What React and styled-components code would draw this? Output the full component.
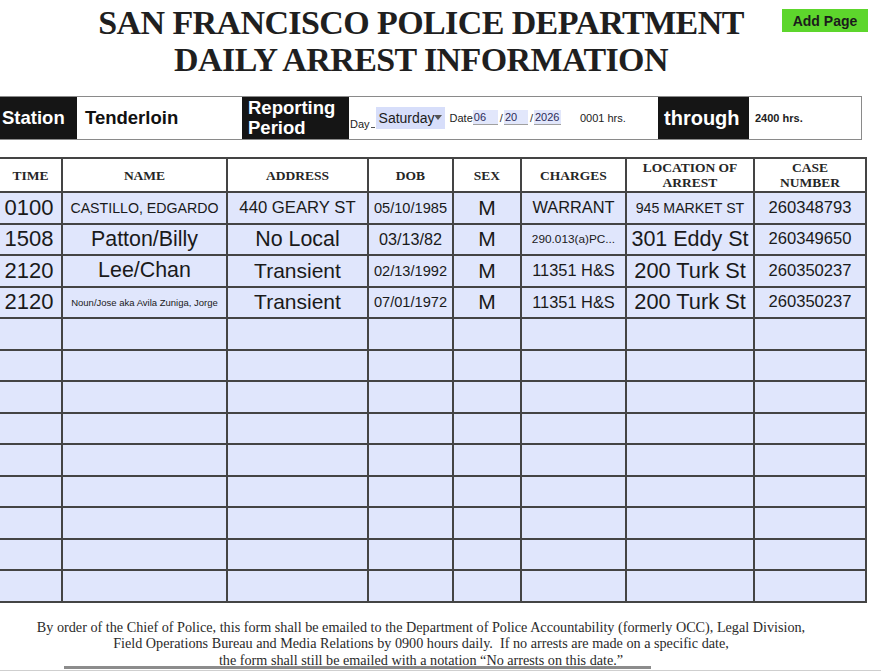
import React from "react";
import styled, { createGlobalStyle } from "styled-components";

const GlobalStyle = createGlobalStyle`
  html, body {
    margin: 0;
    padding: 0;
    background: #ffffff;
    overflow: hidden;
  }
  body {
    font-family: "Liberation Sans", Arial, sans-serif;
    color: #111111;
  }
`;

const rows = [
  {
    time: "0100",
    name: ["CASTILLO, EDGARDO", 14.2],
    address: ["440 GEARY ST", 16.7],
    dob: ["05/10/1985", 14.6],
    charges: ["WARRANT", 16.4],
    location: ["945 MARKET ST", 14.2],
    caseNo: "260348793",
  },
  {
    time: "1508",
    name: ["Patton/Billy", 21.4],
    address: ["No Local", 21.4],
    dob: ["03/13/82", 16.2],
    charges: ["290.013(a)PC...", 11.8],
    location: ["301 Eddy St", 21.5],
    caseNo: "260349650",
  },
  {
    time: "2120",
    name: ["Lee/Chan", 21.4],
    address: ["Transient", 21],
    dob: ["02/13/1992", 14.6],
    charges: ["11351 H&S", 16.4],
    location: ["200 Turk St", 21.8],
    caseNo: "260350237",
  },
  {
    time: "2120",
    name: ["Noun/Jose aka Avila Zuniga, Jorge", 9.5],
    address: ["Transient", 21],
    dob: ["07/01/1972", 14.6],
    charges: ["11351 H&S", 16.4],
    location: ["200 Turk St", 21.8],
    caseNo: "260350237",
  },
];

const columns = [
  { key: "time", label: "TIME", width: 63 },
  { key: "name", label: "NAME", width: 165 },
  { key: "address", label: "ADDRESS", width: 141 },
  { key: "dob", label: "DOB", width: 85 },
  { key: "sex", label: "SEX", width: 68 },
  { key: "charges", label: "CHARGES", width: 105 },
  { key: "location", label: ["LOCATION OF", "ARREST"], width: 128 },
  { key: "caseNo", label: ["CASE", "NUMBER"], width: 112 },
];

const EMPTY_ROWS = 9;

export default function App() {
  return (
    <>
      <GlobalStyle />
      <Page>
        <AddPageButton type="button">Add Page</AddPageButton>

        <Heading>
          SAN FRANCISCO POLICE DEPARTMENT
          <br />
          DAILY ARREST INFORMATION
        </Heading>

        <InfoBar>
          <BarLabel $width={77}>Station</BarLabel>
          <BarValue $width={165}>Tenderloin</BarValue>
          <BarLabel $width={107} $stacked>
            Reporting
            <br />
            Period
          </BarLabel>
          <PeriodBox>
            <DayLabel>Day</DayLabel>
            <DaySelect>
              Saturday
              <Caret />
            </DaySelect>
            <SmallText>Date</SmallText>
            <DateField $width={25}>06</DateField>
            <Slash>/</Slash>
            <DateField $width={24}>20</DateField>
            <Slash>/</Slash>
            <DateField $width={27}>2026</DateField>
            <Hours>0001 hrs.</Hours>
          </PeriodBox>
          <BarLabel $width={91} $big>
            through
          </BarLabel>
          <EndHours>2400 hrs.</EndHours>
        </InfoBar>

        <ArrestTable>
          <colgroup>
            {columns.map((col) => (
              <col key={col.key} style={{ width: col.width }} />
            ))}
          </colgroup>
          <thead>
            <tr>
              {columns.map((col) => (
                <HeadCell key={col.key}>
                  {Array.isArray(col.label) ? (
                    <>
                      {col.label[0]}
                      <br />
                      {col.label[1]}
                    </>
                  ) : (
                    col.label
                  )}
                </HeadCell>
              ))}
            </tr>
          </thead>
          <tbody>
            {rows.map((row, i) => (
              <tr key={i}>
                <Cell $size={22} $shift={3}>
                  {row.time}
                </Cell>
                <Cell $size={row.name[1]}>{row.name[0]}</Cell>
                <Cell $size={row.address[1]}>{row.address[0]}</Cell>
                <Cell $size={row.dob[1]}>{row.dob[0]}</Cell>
                <Cell $size={21}>M</Cell>
                <Cell $size={row.charges[1]}>{row.charges[0]}</Cell>
                <Cell $size={row.location[1]}>{row.location[0]}</Cell>
                <Cell $size={16.6}>{row.caseNo}</Cell>
              </tr>
            ))}
            {Array.from({ length: EMPTY_ROWS }).map((_, i) => (
              <tr key={`empty-${i}`}>
                {columns.map((col) => (
                  <Cell key={col.key} />
                ))}
              </tr>
            ))}
          </tbody>
        </ArrestTable>

        <Notice>
          By order of the Chief of Police, this form shall be emailed to the
          Department of Police Accountability (formerly OCC), Legal Division,
          <br />
          Field Operations Bureau and Media Relations by 0900 hours daily.{"  "}
          If no arrests are made on a specific date,
          <br />
          the form shall still be emailed with a notation “No arrests on this
          date.”
        </Notice>
        <NoticeRule />
        <PageEdge />
      </Page>
    </>
  );
}

const Page = styled.div`
  position: relative;
  width: 881px;
  height: 671px;
  overflow: hidden;
`;

const AddPageButton = styled.button`
  position: absolute;
  top: 9px;
  left: 782px;
  width: 86px;
  height: 23px;
  padding: 0;
  border: none;
  background: #5dd62c;
  color: #1b1b1b;
  font-family: "Liberation Sans", Arial, sans-serif;
  font-weight: 700;
  font-size: 14px;
  cursor: pointer;
`;

const Heading = styled.h1`
  width: 842px;
  margin: 0;
  padding-top: 5px;
  text-align: center;
  font-family: "Liberation Serif", "Times New Roman", serif;
  font-weight: 700;
  font-size: 34px;
  letter-spacing: -0.6px;
  line-height: 36.5px;
  color: #1f1f1f;
`;

const InfoBar = styled.div`
  display: flex;
  width: 862px;
  height: 44px;
  margin-top: 18px;
  box-sizing: border-box;
  border: 1px solid #8a8a8a;
  border-left: none;
  background: #ffffff;
`;

const BarLabel = styled.div`
  display: flex;
  align-items: center;
  flex: 0 0 ${({ $width }) => $width}px;
  box-sizing: border-box;
  padding-left: ${({ $stacked, $big }) => ($stacked || $big ? 6 : 2)}px;
  background: #151515;
  color: #ffffff;
  font-weight: 700;
  font-size: ${({ $big }) => ($big ? 20 : 18.5)}px;
  line-height: ${({ $stacked }) => ($stacked ? 20 : 22)}px;
`;

const BarValue = styled.div`
  display: flex;
  align-items: center;
  flex: 0 0 ${({ $width }) => $width}px;
  box-sizing: border-box;
  padding-left: 8px;
  font-weight: 700;
  font-size: 18.5px;
  color: #111111;
`;

const PeriodBox = styled.div`
  display: flex;
  align-items: center;
  flex: 0 0 309px;
  box-sizing: border-box;
  padding-left: 1px;
  white-space: nowrap;
  overflow: hidden;
`;

const DayLabel = styled.span`
  align-self: flex-end;
  margin-bottom: 9px;
  font-size: 11px;
  line-height: 11px;
  color: #222222;

  &::after {
    content: "";
    display: inline-block;
    width: 4px;
    margin-left: 1px;
    border-bottom: 1px solid #555555;
  }
`;

const SmallText = styled.span`
  font-size: 11px;
  color: #222222;
`;

const DaySelect = styled.span`
  position: relative;
  display: flex;
  align-items: center;
  flex: 0 0 69px;
  height: 22px;
  margin-left: 1px;
  margin-right: 5px;
  box-sizing: border-box;
  padding-left: 3px;
  background: #d7defa;
  font-size: 14px;
  color: #1c1c1c;
`;

const Caret = styled.span`
  position: absolute;
  right: 3px;
  top: 8px;
  width: 0;
  height: 0;
  border-left: 4px solid transparent;
  border-right: 4px solid transparent;
  border-top: 5px solid #555555;
`;

const DateField = styled.span`
  display: inline-block;
  flex: 0 0 ${({ $width }) => $width}px;
  height: 15px;
  margin-bottom: 2px;
  padding-left: 1px;
  box-sizing: border-box;
  background: #e2e7fb;
  border-bottom: 1px solid #a0a0a0;
  font-size: 11px;
  line-height: 14px;
  color: #2b2b5a;
`;

const Slash = styled.span`
  padding: 0 1px 0 2px;
  font-size: 11px;
  color: #333333;
`;

const Hours = styled.span`
  margin-left: 19px;
  font-size: 11px;
  color: #222222;
`;

const EndHours = styled.div`
  display: flex;
  align-items: center;
  flex: 1;
  padding-left: 6px;
  font-size: 11px;
  font-weight: 700;
  color: #222222;
`;

const ArrestTable = styled.table`
  width: 867px;
  margin-top: 17px;
  margin-left: -2px;
  border-collapse: collapse;
  table-layout: fixed;
  border: 2px solid #444444;

  thead tr {
    height: 34px;
  }
  tbody tr {
    height: 31.5px;
  }
`;

const HeadCell = styled.th`
  padding: 0;
  border: 2px solid #444444;
  background: #ffffff;
  font-family: "Liberation Serif", "Times New Roman", serif;
  font-weight: 700;
  font-size: 13.5px;
  line-height: 15px;
  color: #262626;
  text-align: center;
  vertical-align: middle;
`;

const Cell = styled.td`
  padding: 0 ${({ $shift }) => $shift || 0}px 0 0;
  border: 2px solid #444444;
  background: #e0e6fc;
  font-size: ${({ $size }) => $size || 14}px;
  color: #1a1a1a;
  text-align: center;
  vertical-align: middle;
  white-space: nowrap;
  overflow: hidden;
`;

const Notice = styled.p`
  width: 842px;
  margin: 16px 0 0;
  text-align: center;
  font-family: "Liberation Serif", "Times New Roman", serif;
  font-size: 14.2px;
  line-height: 16.5px;
  color: #2a2a2a;
  white-space: pre-wrap;
`;

const NoticeRule = styled.div`
  width: 587px;
  height: 3px;
  margin: -2px 0 0 64px;
  background: #8c8c8c;
`;

const PageEdge = styled.div`
  height: 1px;
  margin-top: 1px;
  background: #cfcfcf;
`;
